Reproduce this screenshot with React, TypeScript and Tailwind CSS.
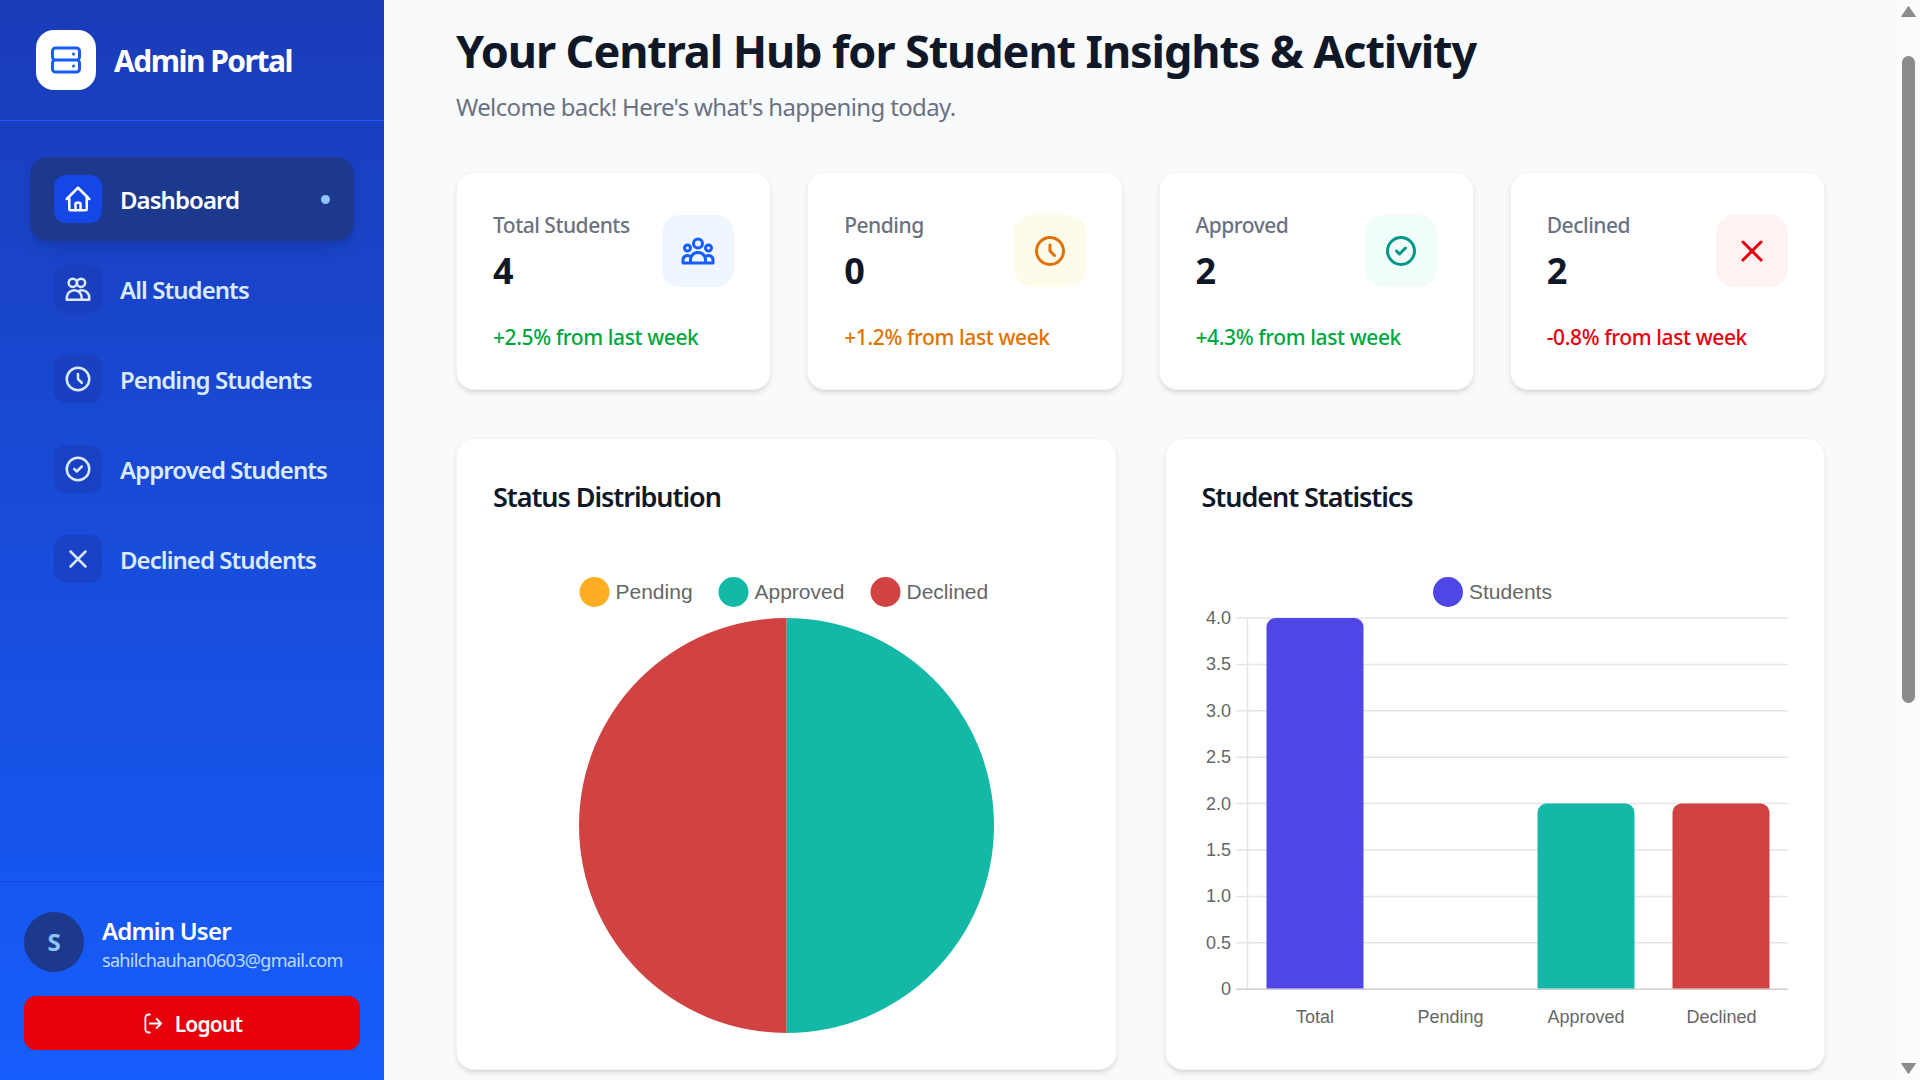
import React from 'react';

const paths = {
  server: 'M5 12h14M5 12a2 2 0 01-2-2V6a2 2 0 012-2h14a2 2 0 012 2v4a2 2 0 01-2 2M5 12a2 2 0 00-2 2v4a2 2 0 002 2h14a2 2 0 002-2v-4a2 2 0 00-2-2m-2-4h.01M17 16h.01',
  home: 'M3 12l2-2m0 0l7-7 7 7M5 10v10a1 1 0 001 1h3m10-11l2 2m-2-2v10a1 1 0 01-1 1h-3m-6 0a1 1 0 001-1v-4a1 1 0 011-1h2a1 1 0 011 1v4a1 1 0 001 1m-6 0h6',
  users: 'M7.8 10.3a3.3 3.3 0 100-6.6 3.3 3.3 0 000 6.6zM14.4 10.3a3.3 3.3 0 100-6.6 3.3 3.3 0 000 6.6zM3 20.5V19a6 6 0 0112 0v1.5zM13.5 13.2a6 6 0 017.5 5.8v1.5h-6',
  group: 'M17 20h5v-2a3 3 0 00-5.356-1.857M17 20H7m10 0v-2c0-.656-.126-1.283-.356-1.857M7 20H2v-2a3 3 0 015.356-1.857M7 20v-2c0-.656.126-1.283.356-1.857m0 0a5.002 5.002 0 019.288 0M15 7a3 3 0 11-6 0 3 3 0 016 0zm6 3a2 2 0 11-4 0 2 2 0 014 0zM7 10a2 2 0 11-4 0 2 2 0 014 0z',
  clock: 'M12 8v4l3 3m6-3a9 9 0 11-18 0 9 9 0 0118 0z',
  check: 'M9 12l2 2 4-4m6 2a9 9 0 11-18 0 9 9 0 0118 0z',
  x: 'M6 18L18 6M6 6l12 12',
  logout: 'M13 16l4-4m0 0l-4-4m4 4H7m0 8H6a3 3 0 01-3-3V7a3 3 0 013-3h1',
};

const Icon = ({ d, className }: { d: string; className: string }) => (
  <svg viewBox="0 0 24 24" fill="none" stroke="currentColor" strokeWidth={2} strokeLinecap="round" strokeLinejoin="round" className={className}>
    <path d={d} />
  </svg>
);

const navItems = [
  { label: 'Dashboard', icon: paths.home, active: true },
  { label: 'All Students', icon: paths.users },
  { label: 'Pending Students', icon: paths.clock },
  { label: 'Approved Students', icon: paths.check },
  { label: 'Declined Students', icon: paths.x },
];

const stats = [
  { label: 'Total Students', value: '4', note: '+2.5% from last week', noteClass: 'text-green-600', icon: paths.group, box: 'bg-blue-50', color: 'text-blue-600' },
  { label: 'Pending', value: '0', note: '+1.2% from last week', noteClass: 'text-amber-600', icon: paths.clock, box: 'bg-amber-50', color: 'text-amber-600' },
  { label: 'Approved', value: '2', note: '+4.3% from last week', noteClass: 'text-green-600', icon: paths.check, box: 'bg-teal-50', color: 'text-teal-600' },
  { label: 'Declined', value: '2', note: '-0.8% from last week', noteClass: 'text-red-600', icon: paths.x, box: 'bg-red-50', color: 'text-red-600' },
];

const INDIGO = '#4f46e5';
const TEAL = '#14b8a6';
const RED = '#d14343';
const AMBER = '#fdae23';

const Sidebar = () => (
  <aside className="w-[384px] shrink-0 h-full flex flex-col bg-linear-to-b from-blue-800 to-blue-600 text-white">
    <div className="h-[121px] shrink-0 flex items-center gap-[18px] px-9 border-b-[1.5px] border-blue-600">
      <div className="w-[60px] h-[60px] bg-white rounded-[18px] flex items-center justify-center">
        <Icon d={paths.server} className="w-9 h-9 text-blue-600" />
      </div>
      <span className="text-[30px] font-bold tracking-[-1.5px]">Admin Portal</span>
    </div>

    <nav className="flex-1 px-[30px] pt-9 flex flex-col gap-1.5">
      {navItems.map((item) => (
        <div
          key={item.label}
          className={
            item.active
              ? 'h-[84px] px-6 flex items-center gap-[18px] rounded-[18px] bg-blue-900 shadow-lg text-white'
              : 'h-[84px] px-6 flex items-center gap-[18px] rounded-[18px] text-blue-100'
          }
        >
          <div className={item.active ? 'w-12 h-12 rounded-xl flex items-center justify-center bg-blue-700' : 'w-12 h-12 rounded-xl flex items-center justify-center bg-blue-800/60'}>
            <Icon d={item.icon} className="w-[30px] h-[30px]" />
          </div>
          <span className="flex-1 pt-[2px] whitespace-nowrap text-[24px] font-semibold tracking-[-0.95px]">{item.label}</span>
          {item.active && <span className="w-[9px] h-[9px] rounded-full bg-blue-300" />}
        </div>
      ))}
    </nav>

    <div className="border-t-[1.5px] border-blue-700 px-6 pt-[29px] pb-[30px]">
      <div className="flex items-center gap-[18px]">
        <div className="w-[60px] h-[60px] rounded-full bg-blue-900 flex items-center justify-center text-[24px] font-bold text-blue-300">S</div>
        <div className="pt-[2px] translate-y-[1px]">
          <div className="text-[24px] leading-[33px] font-semibold tracking-[-0.8px]">Admin User</div>
          <div className="text-[18px] leading-[26px] text-blue-200 tracking-[-0.68px]">sahilchauhan0603@gmail.com</div>
        </div>
      </div>
      <button className="mt-6 w-full h-[54px] rounded-xl bg-red-600 flex items-center justify-center gap-1.5 text-[21px] font-semibold tracking-[-0.8px]">
        <Icon d={paths.logout} className="w-[27px] h-[27px] stroke-[1.6]" />
        <span className="pt-[3px]">Logout</span>
      </button>
    </div>
  </aside>
);

const StatCard = ({ s }: { s: (typeof stats)[number] }) => (
  <div className="bg-white rounded-[18px] border-[1.5px] border-gray-100 shadow-md px-9 pt-[36px] h-[218px]">
    <div className="flex justify-between items-start">
      <div className="pt-[1px]">
        <div className="text-[21px] leading-[31.5px] text-gray-500 font-medium tracking-[-0.5px]">{s.label}</div>
        <div className="mt-[5px] text-[36px] leading-[48px] font-bold text-gray-900">{s.value}</div>
      </div>
      <div className={`w-[72px] h-[72px] mt-[6px] rounded-[18px] flex items-center justify-center ${s.box} ${s.color}`}>
        <Icon d={s.icon} className="w-9 h-9" />
      </div>
    </div>
    <div className={`mt-[27px] text-[21px] leading-[31.5px] font-medium tracking-[-0.4px] ${s.noteClass}`}>{s.note}</div>
  </div>
);

const LegendItem = ({ cx, color, label }: { cx: number; color: string; label: string }) => (
  <g>
    <circle cx={cx} cy={33} r={15} fill={color} />
    <text x={cx + 21} y={39.5} fontSize={21} fill="#666666" className="font-['Liberation_Sans',Arial,sans-serif]">
      {label}
    </text>
  </g>
);

const PieChart = () => (
  <svg width={586} height={480} viewBox="-1 0 586 480" className="block">
    <LegendItem cx={100.5} color={AMBER} label="Pending" />
    <LegendItem cx={239.5} color={TEAL} label="Approved" />
    <LegendItem cx={391.5} color={RED} label="Declined" />
    <path d="M292.5 59 A207.5 207.5 0 0 1 292.5 474 Z" fill={TEAL} />
    <path d="M292.5 59 A207.5 207.5 0 0 0 292.5 474 Z" fill={RED} />
    <line x1={292.5} y1={59} x2={292.5} y2={474} stroke="#9a8f80" strokeWidth={1} strokeOpacity={0.6} />
  </svg>
);

const ticks = ['4.0', '3.5', '3.0', '2.5', '2.0', '1.5', '1.0', '0.5', '0'];

const topBar = (x: number, top: number, bottom: number) =>
  `M${x} ${bottom}V${top + 9}a9 9 0 0 1 9 -9H${x + 88}a9 9 0 0 1 9 9V${bottom}Z`;

const BarChart = () => (
  <svg width={586} height={480} viewBox="-1 0 586 480" className="block">
    <LegendItem cx={245} color={INDIGO} label="Students" />
    {/* grid */}
    <line x1={44.5} y1={59} x2={44.5} y2={430} stroke="#e5e5e5" strokeWidth={1.5} />
    {ticks.map((t, i) => {
      const y = 59 + i * 46.4;
      return (
        <g key={t}>
          <line x1={33} y1={y} x2={585} y2={y} stroke={i === 8 ? '#cfcfcf' : '#e5e5e5'} strokeWidth={1.5} />
          <text x={28} y={y + 6} textAnchor="end" fontSize={18} fill="#666666" className="font-['Liberation_Sans',Arial,sans-serif]">
            {t}
          </text>
        </g>
      );
    })}
    <path d={topBar(63.5, 59, 429.5)} fill={INDIGO} />
    <path d={topBar(334.5, 244.5, 429.5)} fill={TEAL} />
    <path d={topBar(469.5, 244.5, 429.5)} fill={RED} />
    {['Total', 'Pending', 'Approved', 'Declined'].map((l, i) => (
      <text key={l} x={112 + i * 135.5} y={463.5} textAnchor="middle" fontSize={18} fill="#666666" className="font-['Liberation_Sans',Arial,sans-serif]">
        {l}
      </text>
    ))}
  </svg>
);

const ChartCard = ({ title, children }: { title: string; children: React.ReactNode }) => (
  <div className="bg-white rounded-[18px] border-[1.5px] border-gray-100 shadow-md px-9 pt-[38px] h-[632px]">
    <h3 className="text-[27px] leading-[40.5px] font-semibold text-gray-900 tracking-[-1.05px] mb-[41px]">{title}</h3>
    {children}
  </div>
);

const Scrollbar = () => (
  <div className="w-[23px] shrink-0 h-full bg-[#fbfbfb] flex flex-col items-center relative">
    <svg width={15} height={11} viewBox="0 0 15 11" className="mt-[6px]">
      <path d="M7.5 0.5 L14.5 10.5 H0.5 Z" fill="#8b8b8b" stroke="#8b8b8b" strokeLinejoin="round" />
    </svg>
    <div className="mt-[39px] w-[13px] h-[647px] rounded-full bg-[#8b8b8b]" />
    <svg width={15} height={11} viewBox="0 0 15 11" className="mt-auto mb-[6px]">
      <path d="M7.5 10.5 L14.5 0.5 H0.5 Z" fill="#8b8b8b" stroke="#8b8b8b" strokeLinejoin="round" />
    </svg>
  </div>
);

export default function App() {
  return (
    <div className="flex h-screen overflow-hidden bg-gray-50 font-['Noto_Sans',sans-serif]">
      <Sidebar />

      <main className="flex-1 min-w-0 h-full overflow-hidden px-[72px] pt-[24px]">
        <h1 className="text-[45px] leading-[54px] font-bold text-gray-900 tracking-[-1.1px]">
          Your Central Hub for Student Insights &amp; Activity
        </h1>
        <p className="mt-[11px] text-[24px] leading-[36px] text-gray-500 tracking-[-0.64px]">Welcome back! Here's what's happening today.</p>

        <div className="grid grid-cols-4 gap-9 mt-[47px] mb-12">
          {stats.map((s) => (
            <StatCard key={s.label} s={s} />
          ))}
        </div>

        <div className="grid grid-cols-2 gap-12">
          <ChartCard title="Status Distribution">
            <PieChart />
          </ChartCard>
          <ChartCard title="Student Statistics">
            <BarChart />
          </ChartCard>
        </div>
      </main>

      <Scrollbar />
    </div>
  );
}
